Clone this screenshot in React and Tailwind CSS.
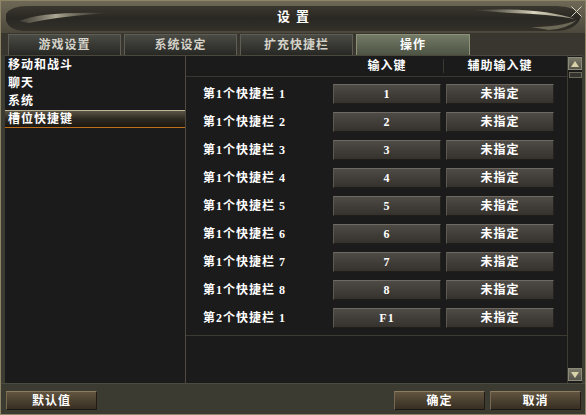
import React from "react";

const tabs = [
  { name: "游戏设置", active: false },
  { name: "系统设定", active: false },
  { name: "扩充快捷栏", active: false },
  { name: "操作", active: true },
];

const menu = ["移动和战斗", "聊天", "系统", "槽位快捷键"];

const rows = [
  { label: "第1个快捷栏 1", key: "1" },
  { label: "第1个快捷栏 2", key: "2" },
  { label: "第1个快捷栏 3", key: "3" },
  { label: "第1个快捷栏 4", key: "4" },
  { label: "第1个快捷栏 5", key: "5" },
  { label: "第1个快捷栏 6", key: "6" },
  { label: "第1个快捷栏 7", key: "7" },
  { label: "第1个快捷栏 8", key: "8" },
  { label: "第2个快捷栏 1", key: "F1" },
];

function TitleBlade() {
  return (
    <svg className="absolute inset-0" width="584" height="32" viewBox="0 0 584 32">
      <defs>
        <linearGradient id="frame" x1="0" y1="0" x2="0" y2="1">
          <stop offset="0" stopColor="#6e6856" />
          <stop offset="1" stopColor="#4c483b" />
        </linearGradient>
        <linearGradient id="blade" x1="0" y1="0" x2="0" y2="1">
          <stop offset="0" stopColor="#3a372f" />
          <stop offset="0.5" stopColor="#2a2823" />
          <stop offset="1" stopColor="#34312a" />
        </linearGradient>
        <linearGradient id="sheenL" x1="0" y1="0" x2="1" y2="0">
          <stop offset="0" stopColor="#8e8a76" stopOpacity="0.2" />
          <stop offset="0.4" stopColor="#b8b49e" stopOpacity="0.9" />
          <stop offset="1" stopColor="#6e6a58" stopOpacity="0" />
        </linearGradient>
        <linearGradient id="sheenR" x1="0" y1="0" x2="1" y2="0">
          <stop offset="0" stopColor="#8e8a76" stopOpacity="0" />
          <stop offset="0.6" stopColor="#d8d4be" stopOpacity="1" />
          <stop offset="1" stopColor="#a8a48e" stopOpacity="0.8" />
        </linearGradient>
      </defs>
      <rect width="584" height="32" fill="url(#frame)" />
      <path d="M5,13 Q10,5 26,5 L556,5 Q576,6 580,15 Q577,28 558,30 L22,30 Q8,29 5,20 Z" fill="url(#blade)" />
      <path d="M18,20 Q40,10 110,12 Q60,15 28,22 Z" fill="url(#sheenL)" />
      <path d="M470,9 Q540,6 574,18 Q548,13 510,12 Z" fill="url(#sheenR)" />
      <path d="M530,26 Q560,26 576,19 Q566,28 548,29 Z" fill="#6d6957" />
    </svg>
  );
}

function KeyButton({ children, className }) {
  return (
    <div
      className={
        "h-[20px] flex items-center justify-center bg-gradient-to-b from-[#4e4b46] to-[#35322e] border border-t-[#6e6a62] border-l-[#5c5952] border-r-[#25231f] border-b-[#1f1d1a] text-white text-[12px] font-bold tracking-[1px] " +
        className
      }
    >
      {children}
    </div>
  );
}

function BarButton({ children }) {
  return (
    <div className="w-[91px] h-[19px] flex items-center justify-center bg-gradient-to-b from-[#625540] to-[#372e22] border border-t-[#8c7c62] border-l-[#786a52] border-r-[#221c14] border-b-[#1c1710] text-white text-[12px] font-bold tracking-[1px]">
      {children}
    </div>
  );
}

export default function App() {
  return (
    <div className="w-[586px] h-[415px] flex flex-col bg-[#3d3c33] border border-[#8d8566] font-['Liberation_Serif','Noto_Sans_CJK_SC',sans-serif] select-none overflow-hidden">
      {/* title */}
      <div className="relative h-[32px] shrink-0 flex items-center justify-center">
        <TitleBlade />
        <span className="relative text-white text-[13px] font-bold tracking-[6px] pl-[6px]">设置</span>
        <svg className="absolute right-[3px] top-[5px]" width="11" height="11" viewBox="0 0 11 11">
          <path d="M0.5,0.5 L10.5,10.5 M10.5,0.5 L0.5,10.5" stroke="#dcd8c8" strokeWidth="1" />
        </svg>
      </div>

      {/* tabs */}
      <div className="h-[22px] shrink-0 flex items-end gap-[3px] pl-[7px] bg-[#38362e]">
        {tabs.map((t) => (
          <div
            key={t.name}
            className={
              t.active
                ? "w-[114px] h-[21px] flex items-center justify-center bg-gradient-to-b from-[#737a66] to-[#4d5444] border border-[#8c9178] border-b-0 text-white text-[12px] font-bold tracking-[1px]"
                : "w-[113px] h-[21px] flex items-center justify-center bg-gradient-to-b from-[#4b4b45] to-[#272724] border border-[#5f5e55] border-b-0 text-[#d4d2c8] text-[12px] font-bold tracking-[1px]"
            }
          >
            {t.name}
          </div>
        ))}
      </div>

      {/* main */}
      <div className="flex h-[328px] shrink-0 ml-[4px] mr-[3px]">
        {/* left list */}
        <div className="w-[180px] bg-[#1b1b1b] border-t border-[#4a473d] flex flex-col">
          {menu.map((m, i) =>
            i === 3 ? (
              <div
                key={m}
                className="h-[18px] flex items-center pl-[3px] text-white text-[12px] font-bold tracking-[1px] bg-gradient-to-b from-[#5a5544] via-[#2e2a22] to-[#1c1812] border-t border-[#bdb596] border-b border-b-[#c06f1c]"
              >
                {m}
              </div>
            ) : (
              <div key={m} className="h-[18px] flex items-center pl-[3px] text-white text-[12px] font-bold tracking-[1px]">
                {m}
              </div>
            )
          )}
        </div>

        {/* right table */}
        <div className="w-[382px] bg-[#1b1b1b] border-l border-[#4f4b40] border-t border-t-[#4a473d] flex flex-col">
          <div className="h-[21px] flex items-center border-b border-[#3a3833] text-white text-[12px] font-bold tracking-[1px]">
            <div className="w-[147px]" />
            <div className="w-[108px] text-center">输入键</div>
            <div className="w-[5px] h-[14px] flex justify-center">
              <div className="w-px h-full bg-[#3a3833]" />
            </div>
            <div className="w-[108px] text-center">辅助输入键</div>
          </div>
          <div className="pt-[3px] pb-[3px] border-b border-[#3d3a33]">
            {rows.map((r) => (
              <div key={r.label} className="h-[28px] flex items-center">
                <div className="w-[147px] pl-[17px] text-white text-[12px] font-bold tracking-[1px] whitespace-pre">{r.label}</div>
                <KeyButton className="w-[108px]">{r.key}</KeyButton>
                <div className="w-[5px]" />
                <KeyButton className="w-[108px]">未指定</KeyButton>
              </div>
            ))}
          </div>
        </div>

        {/* scrollbar */}
        <div className="w-[15px] bg-[#1c1c1b] border-l border-[#3e3c35] border-t border-t-[#4a473d] flex flex-col justify-between items-center">
          <div className="flex flex-col items-center">
            <div className="w-[14px] h-[13px] mt-px bg-gradient-to-b from-[#7a7868] to-[#55534a] border border-[#8c8a78] flex items-center justify-center">
              <svg width="8" height="6" viewBox="0 0 8 6">
                <path d="M4,0 L8,6 L0,6 Z" fill="#d9d2a8" />
              </svg>
            </div>
            <div className="w-[13px] h-[6px] mt-[2px] bg-[#34332d] border border-[#6c6a5c]" />
          </div>
          <div className="w-[14px] h-[13px] mb-[2px] bg-gradient-to-b from-[#7a7868] to-[#55534a] border border-[#8c8a78] flex items-center justify-center">
            <svg width="8" height="6" viewBox="0 0 8 6">
              <path d="M0,0 L8,0 L4,6 Z" fill="#d9d2a8" />
            </svg>
          </div>
        </div>
      </div>

      {/* bottom bar */}
      <div className="flex-1 flex items-start justify-between pt-[7px] pl-[5px] pr-[4px] border-t border-[#4d4b40] bg-[#3b3b32]">
        <BarButton>默认值</BarButton>
        <div className="flex gap-[5px]">
          <BarButton>确定</BarButton>
          <BarButton>取消</BarButton>
        </div>
      </div>
    </div>
  );
}
